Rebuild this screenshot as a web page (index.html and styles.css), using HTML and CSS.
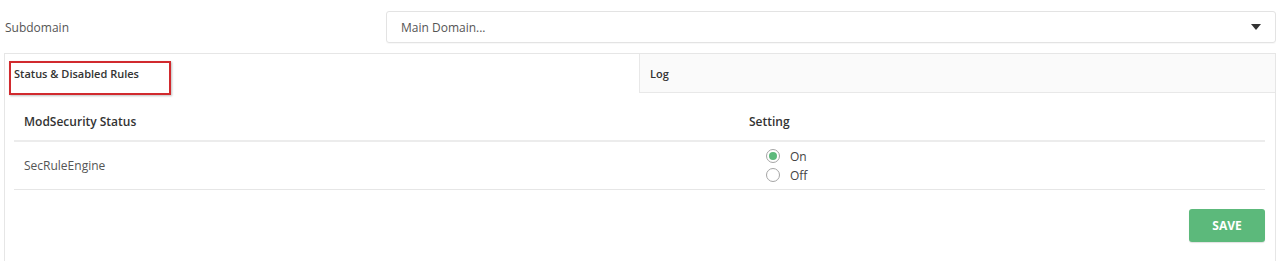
FILE: index.html
```html
<!DOCTYPE html>
<html>
<head>
<meta charset="utf-8">
<link rel="stylesheet" href="styles.css">
</head>
<body>
<div class="page">
  <div class="field-row">
    <label class="field-label">Subdomain</label>
    <div class="select">
      <span class="select-text">Main Domain...</span>
      <span class="caret"></span>
    </div>
  </div>
  <div class="panel">
    <div class="tabs">
      <div class="tab active">Status &amp; Disabled Rules<span class="highlight"></span></div>
      <div class="tab">Log</div>
    </div>
    <div class="panel-body">
      <div class="table">
        <div class="thead">
          <div class="col-name">ModSecurity Status</div>
          <div class="col-setting">Setting</div>
        </div>
        <div class="trow">
          <div class="col-name">SecRuleEngine</div>
          <div class="col-setting">
            <div class="radio"><span class="dot checked"></span><span>On</span></div>
            <div class="radio"><span class="dot"></span><span>Off</span></div>
          </div>
        </div>
      </div>
      <div class="actions">
        <button class="btn-save">SAVE</button>
      </div>
    </div>
  </div>
</div>
</body>
</html>
```
FILE: styles.css
```css
* { box-sizing: border-box; }
html, body { margin: 0; padding: 0; background: #fff; }
body {
  font-family: "Open Sans", "DejaVu Sans", sans-serif;
  font-size: 12px;
  color: #555;
  overflow: hidden;
}
.page { padding: 11px 4px 0 4px; }
.field-row { display: flex; align-items: center; }
.field-label { width: 382px; padding-left: 1px; font-size: 12px; color: #555; }
.select {
  flex: 1;
  height: 32px;
  border: 1px solid #e3e3e3;
  border-radius: 3px;
  display: flex;
  align-items: center;
  justify-content: space-between;
  padding: 0 14px 0 14px;
  box-shadow: 0 1px 1px rgba(0,0,0,0.03);
}
.select-text { color: #555; font-size: 12px; }
.caret {
  width: 0; height: 0;
  border-left: 5px solid transparent;
  border-right: 5px solid transparent;
  border-top: 6px solid #333;
}
.panel {
  margin-top: 10px;
  border: 1px solid #e6e6e6;
  height: 220px;
}
.tabs { display: flex; height: 39px; border-bottom: 1px solid #e8e8e8; }
.tab {
  flex: 1;
  position: relative;
  display: flex;
  align-items: center;
  padding-left: 9px;
  font-weight: 600;
  font-size: 11px;
  color: #333;
  background: #fafafa;
  border-left: 1px solid #e8e8e8;
}
.tab.active { background: #fff; border-left: none; margin-bottom: -1px; }
.tab:not(.active) { padding-left: 10px; }
.highlight {
  position: absolute;
  left: 4px; top: 7px;
  width: 162px; height: 34px;
  border: 2px solid #d12a2e;
  box-shadow: 1px 1px 2px rgba(0,0,0,0.25);
}
.panel-body { padding: 9px 10px 0 9px; }
.table { width: 100%; }
.thead, .trow { display: flex; }
.thead { height: 40px; align-items: center; border-bottom: 2px solid #ececec; font-weight: 600; color: #333; }
.trow { height: 48px; align-items: center; border-bottom: 1px solid #e6e6e6; }
.col-name { width: 725px; padding-left: 10px; }
.col-setting { flex: 1; padding-left: 10px; }
.trow .col-setting { padding-left: 27px; }
.radio { display: flex; align-items: center; height: 19px; color: #444; }
.dot {
  width: 14px; height: 14px;
  border: 1px solid #a5a5a5;
  border-radius: 50%;
  margin-right: 10px;
  position: relative;
  background: #fff;
}
.dot.checked::after {
  content: "";
  position: absolute;
  left: 2px; top: 2px;
  width: 8px; height: 8px;
  border-radius: 50%;
  background: #5cb97b;
}
.actions { display: flex; justify-content: flex-end; margin-top: 19px; }
.btn-save {
  width: 76px; height: 33px;
  border: none;
  border-radius: 3px;
  background: #5cb97b;
  color: #fff;
  font-family: "Open Sans", "DejaVu Sans", sans-serif;
  font-weight: 700;
  font-size: 12px;
  box-shadow: 0 1px 1px rgba(0,0,0,0.12);
}
```
